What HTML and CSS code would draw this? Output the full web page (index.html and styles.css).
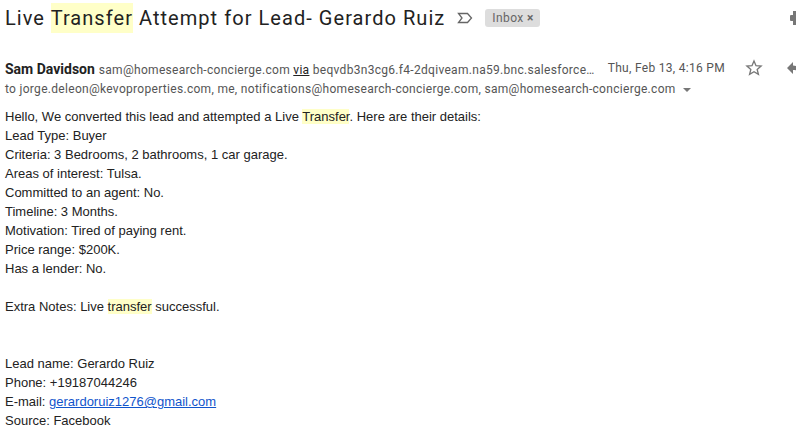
FILE: index.html
```html
<!DOCTYPE html>
<html>
<head>
<meta charset="utf-8">
<link rel="stylesheet" href="styles.css">
</head>
<body>
<div class="page">
  <div class="title-row">
    <h2 class="subject">Live <span class="hl hl-title">Transfer</span> Attempt for Lead- Gerardo Ruiz</h2>
    <svg class="imp" width="16" height="12" viewBox="0 0 16 12"><path d="M1.5 1.5 H10.5 L14.5 6 L10.5 10.5 H1.5 L5 6 Z" fill="none" stroke="#666" stroke-width="1.3" stroke-linejoin="miter"/></svg>
    <span class="chip">Inbox <span class="chip-x">×</span></span>
    <span class="spacer"></span>
    <svg class="print" width="16" height="16" viewBox="0 0 16 16"><rect x="4" y="1" width="8" height="4" fill="#777"/><rect x="1" y="5" width="14" height="6" rx="1" fill="#777"/><rect x="4" y="9" width="8" height="6" fill="#777"/></svg>
  </div>

  <div class="from-row">
    <div class="from">
      <span class="name">Sam Davidson</span>
      <span class="addr">sam@homesearch-concierge.com <span class="via">via</span> beqvdb3n3cg6.f4-2dqiveam.na59.bnc.salesforce…</span>
    </div>
    <span class="date">Thu, Feb 13, 4:16 PM</span>
    <svg class="star" width="20" height="20" viewBox="0 0 24 24"><path d="M12 3.5 L14.4 9.2 L20.5 9.7 L15.8 13.7 L17.3 19.7 L12 16.5 L6.7 19.7 L8.2 13.7 L3.5 9.7 L9.6 9.2 Z" fill="none" stroke="#777" stroke-width="1.6" stroke-linejoin="miter"/></svg>
    <svg class="reply" width="20" height="20" viewBox="0 0 20 20"><path d="M8 4 L2 10 L8 16 V12 C12 12 15 13 18 16 C17 11 14 8 8 7.5 Z" fill="#777"/></svg>
  </div>
  <div class="to-row">to jorge.deleon@kevoproperties.com, me, notifications@homesearch-concierge.com, sam@homesearch-concierge.com <span class="caret"></span></div>

  <div class="body">
    <div>Hello, We converted this lead and attempted a Live <span class="hl">Transfer</span>. Here are their details:</div>
    <div>Lead Type: Buyer</div>
    <div>Criteria: 3 Bedrooms, 2 bathrooms, 1 car garage.</div>
    <div>Areas of interest: Tulsa.</div>
    <div>Committed to an agent: No.</div>
    <div>Timeline: 3 Months.</div>
    <div>Motivation: Tired of paying rent.</div>
    <div>Price range: $200K.</div>
    <div>Has a lender: No.</div>
    <div><br></div>
    <div>Extra Notes: Live <span class="hl">transfer</span> successful.</div>
    <div><br></div>
    <div><br></div>
    <div>Lead name: Gerardo Ruiz</div>
    <div>Phone: +19187044246</div>
    <div>E-mail: <a href="#" class="link">gerardoruiz1276@gmail.com</a></div>
    <div>Source: Facebook</div>
  </div>
</div>
</body>
</html>
```

FILE: styles.css
```css
html, body {
  margin: 0;
  padding: 0;
  background: #fff;
  overflow: hidden;
}
.page {
  width: 809px;
  padding-left: 5px;
  box-sizing: border-box;
}
.title-row {
  display: flex;
  align-items: center;
  height: 36px;
}
.subject {
  margin: 0;
  font-family: Roboto, "Noto Sans", sans-serif;
  font-weight: 400;
  font-size: 20px;
  color: #222;
  line-height: 24px;
  letter-spacing: 1.05px;
}
.hl {
  background: #ffffc8;
}
.hl-title {
  padding: 3px 0;
}
.imp {
  margin-left: 12px;
  flex: none;
}
.chip {
  margin-left: 12px;
  background: #ddd;
  border-radius: 3px;
  font-family: Roboto, sans-serif;
  font-size: 12px;
  color: #666;
  padding: 2px 6px 2px 7px;
  line-height: 14px;
  letter-spacing: 0.4px;
}
.chip-x {
  font-weight: 700;
  font-size: 12px;
}
.spacer {
  flex: 1;
}
.print {
  flex: none;
  margin-right: 4px;
}
.from-row {
  display: flex;
  align-items: center;
  margin-top: 21px;
  height: 22px;
}
.from {
  flex: 1;
  font-family: Roboto, sans-serif;
  white-space: nowrap;
}
.name {
  font-weight: 700;
  font-size: 14px;
  color: #222;
}
.addr {
  font-size: 12px;
  color: #555;
  letter-spacing: 0.3px;
}
.via {
  text-decoration: underline;
  color: #222;
}
.date {
  font-family: Roboto, sans-serif;
  font-size: 12px;
  color: #555;
  letter-spacing: 0.3px;
  white-space: nowrap;
}
.star {
  margin-left: 19px;
  flex: none;
}
.reply {
  margin-left: 21px;
  margin-right: 4px;
  flex: none;
}
.to-row {
  font-family: Roboto, sans-serif;
  font-size: 12px;
  color: #555;
  line-height: 16px;
  letter-spacing: 0.3px;
  margin-top: 2px;
}
.caret {
  display: inline-block;
  width: 0;
  height: 0;
  border-left: 4px solid transparent;
  border-right: 4px solid transparent;
  border-top: 4px solid #777;
  margin-left: 4px;
  vertical-align: middle;
}
.body {
  margin-top: 10px;
  font-family: "Liberation Sans", Arial, sans-serif;
  font-size: 13px;
  line-height: 19px;
  color: #222;
}
.link {
  color: #15c;
}
```
